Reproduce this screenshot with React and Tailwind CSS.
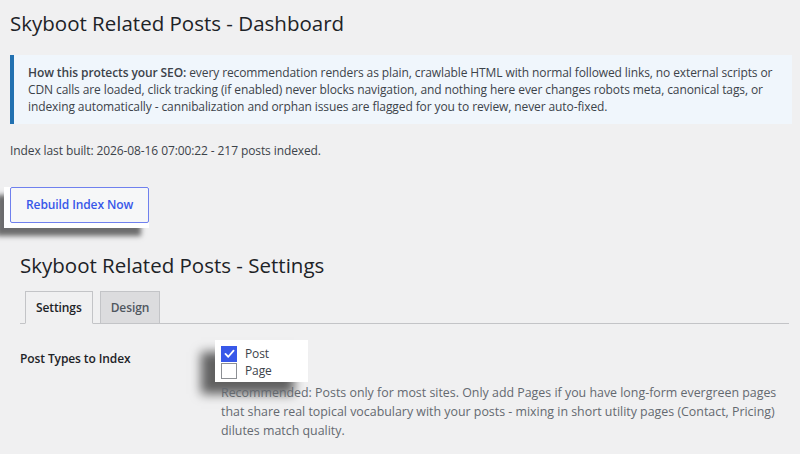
import { useState } from 'react';

function CheckRow({ label, checked, onChange }) {
  return (
    <label className="flex items-center gap-[8px] h-[17px] cursor-pointer">
      <span
        className={
          'w-[16px] h-[16px] border flex items-center justify-center ' +
          (checked ? 'bg-[#3858e9] border-[#3858e9]' : 'bg-white border-[#8c8f94]')
        }
      >
        {checked && (
          <svg viewBox="0 0 16 16" className="w-[13px] h-[13px]">
            <path d="M3 8.5 L6.5 12 L13 4.5" fill="none" stroke="white" strokeWidth="2.2" strokeLinecap="round" strokeLinejoin="round" />
          </svg>
        )}
      </span>
      <input type="checkbox" className="hidden" checked={checked} onChange={onChange} />
      <span className="text-[#3c434a]">{label}</span>
    </label>
  );
}

export default function App() {
  const [tab, setTab] = useState('settings');
  const [types, setTypes] = useState({ post: true, page: false });

  return (
    <div className="min-h-screen bg-[#f0f0f1] text-[12px] tracking-[-0.1px] text-[#3c434a] font-['Segoe_UI','Open_Sans',sans-serif]">
      {/* Dashboard */}
      <div className="pl-[10px] pr-[8px]">
        <h1 className="pt-[9px] text-[20.5px] tracking-normal leading-[29px] text-[#1d2327]">Skyboot Related Posts - Dashboard</h1>

        <div className="mt-[17px] border-l-4 border-[#2271b1] bg-[#f0f6fc] pl-[14px] pr-[10px] py-[9px] leading-[17px]">
          <strong className="font-semibold">How this protects your SEO:</strong> every recommendation renders as plain, crawlable HTML with normal followed links, no external scripts or CDN calls are loaded, click tracking (if enabled) never blocks navigation, and nothing here ever changes robots meta, canonical tags, or indexing automatically - cannibalization and orphan issues are flagged for you to review, never auto-fixed.
        </div>

        <p className="mt-[18px] leading-[17px]">Index last built: 2026-08-16 07:00:22 - 217 posts indexed.</p>

        <div className="mt-[28px] -ml-[6px] w-fit bg-white pl-[6px] pb-[5px] shadow-[-8px_8px_5px_rgba(0,0,0,0.55)]">
          <button className="h-[36px] px-[15px] border border-[#6f80ee] rounded-[2px] bg-[#f6f7f8] text-[#3858e9] font-semibold">
            Rebuild Index Now
          </button>
        </div>
      </div>

      {/* Settings */}
      <div className="pl-[20px] pr-[11px] mt-[24px]">
        <h2 className="text-[20.5px] tracking-normal leading-[26px] text-[#1d2327]">Skyboot Related Posts - Settings</h2>

        <div className="mt-[13px] flex items-end gap-[7px] pl-[5px] border-b border-[#c3c4c7] h-[33px]">
          <button
            onClick={() => setTab('settings')}
            className={
              'h-[33px] px-[10px] font-semibold border border-[#c3c4c7] -mb-px ' +
              (tab === 'settings' ? 'bg-[#f0f0f1] border-b-[#f0f0f1] text-[#1d2327]' : 'bg-[#dcdcde] text-[#50575e]')
            }
          >
            Settings
          </button>
          <button
            onClick={() => setTab('design')}
            className={
              'h-[33px] px-[10px] font-semibold border border-[#c3c4c7] -mb-px ' +
              (tab === 'design' ? 'bg-[#f0f0f1] border-b-[#f0f0f1] text-[#1d2327]' : 'bg-[#dcdcde] text-[#50575e]')
            }
          >
            Design
          </button>
        </div>

        <div className="flex mt-[16px]">
          <div className="w-[201px] shrink-0 pt-[9px] font-semibold text-[#1d2327] leading-[20px]">Post Types to Index</div>
          <div className="flex-1">
            <div className="-ml-[6px] w-fit bg-white pl-[6px] pt-[5px] pr-[36px] pb-[3px] shadow-[-14px_12px_10px_rgba(0,0,0,0.6)]">
              <CheckRow label="Post" checked={types.post} onChange={() => setTypes({ ...types, post: !types.post })} />
              <CheckRow label="Page" checked={types.page} onChange={() => setTypes({ ...types, page: !types.page })} />
            </div>
            <p className="mt-[1px] text-[12.4px] tracking-normal text-[#646970] leading-[19px]">
              Recommended: Posts only for most sites. Only add Pages if you have long-form evergreen pages that share real topical vocabulary with your posts - mixing in short utility pages (Contact, Pricing) dilutes match quality.
            </p>
          </div>
        </div>
      </div>
    </div>
  );
}
